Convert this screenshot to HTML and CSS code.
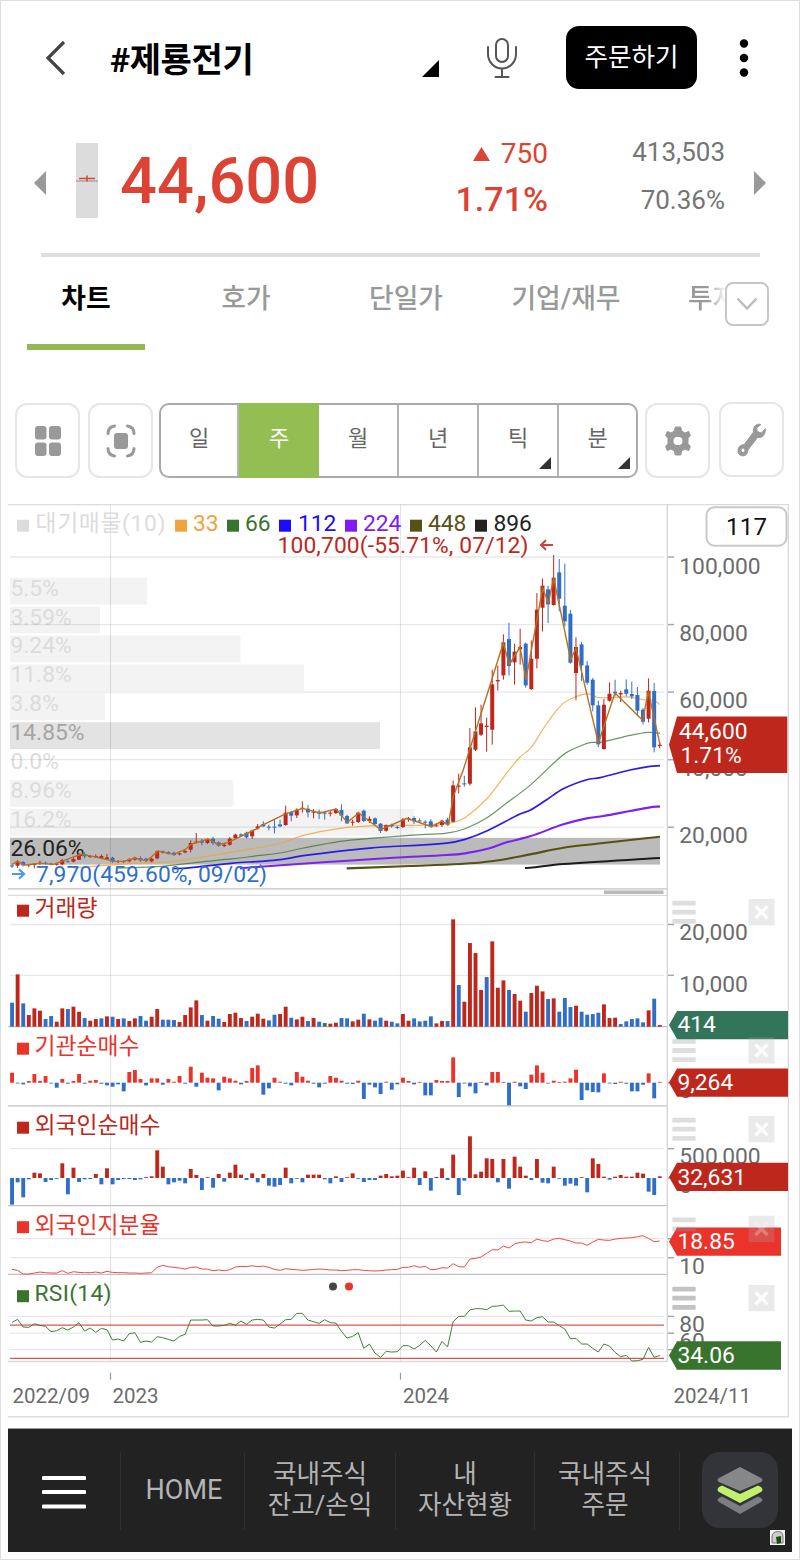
FILE: index.html
```html
<!DOCTYPE html>
<html lang="ko">
<head>
  <meta charset="UTF-8">
  <meta name="viewport" content="width=device-width, initial-scale=1">
  <title>제룡전기 - 차트</title>
  <link rel="stylesheet" href="styles.css">
</head>
<body>
<div class="screen">

<header class="topbar">
<svg class="back" width="20" height="36" viewBox="0 0 20 36"><path d="M18 2 2 18 18 34"/></svg>
<h1 class="name">#제룡전기</h1>
<svg class="corner" width="17" height="17" viewBox="0 0 17 17"><path d="M17 0V17H0z"/></svg>
<svg class="mic" width="32" height="42" viewBox="0 0 32 42"><rect x="10" y="2" width="12" height="23" rx="6"/><path d="M2 10v7a14 14.5 0 0 0 28 0V10M16 32v8M9.500 40h13"/></svg>
<button class="order">주문하기</button>
<svg class="more" width="10" height="40" viewBox="0 0 10 40"><circle cx="5" cy="5.500" r="4.200"/><circle cx="5" cy="20" r="4.200"/><circle cx="5" cy="34.500" r="4.200"/></svg>
</header>

<section class="quote">
<svg class="arrow" width="12" height="24" viewBox="0 0 12 24"><path d="M12 0V24L0 12z"/></svg>
<svg class="mini" width="22" height="75" viewBox="0 0 22 75"><rect width="22" height="75" fill="#dcdcdc"/><path d="M0 38h22" stroke="#a8a8a8" stroke-width="1.500"/><path d="M3 35.500h16M11 32.500v6" stroke="#dd4334" stroke-width="1.500"/></svg>
<strong class="price">44,600</strong>
<div class="diff">
<span class="won"><svg width="17" height="14" viewBox="0 0 17 14"><path d="M8.500 0 17 14H0z"/></svg>750</span>
<span class="pct">1.71%</span>
</div>
<div class="amount"><span>413,503</span><span>70.36%</span></div>
<svg class="arrow" width="12" height="24" viewBox="0 0 12 24"><path d="M0 0V24L12 12z"/></svg>
</section>

<nav class="tabs">
<a class="tab on">차트</a>
<a class="tab">호가</a>
<a class="tab">단일가</a>
<a class="tab">기업/재무</a>
<a class="tab last">투자</a>
<button class="fold"><svg width="22" height="14" viewBox="0 0 22 14"><path d="M1.500 1.500 11 11.500 20.500 1.500"/></svg></button>
</nav>

<section class="tools">
<button class="tool"><svg width="28" height="30" viewBox="0 0 28 30"><rect x="1" y="0" width="11.500" height="13.500" rx="3"/><rect x="15" y="0" width="12" height="13.500" rx="3"/><rect x="1" y="16.500" width="11.500" height="13.500" rx="3"/><rect x="15" y="16.500" width="12" height="13.500" rx="3"/></svg></button>
<button class="tool scan"><svg width="30" height="34" viewBox="0 0 30 34"><rect x="8" y="9" width="14" height="16" rx="3"/><path class="ln" d="M2 9.500Q2 3 8.500 2M21.500 2Q28 3 28 9.500M28 24.500Q28 31 21.500 32M8.500 32Q2 31 2 24.500"/></svg></button>
<div class="period">
<span>일</span>
<span class="on">주</span>
<span>월</span>
<span>년</span>
<span class="sub">틱</span>
<span class="sub">분</span>
</div>
<button class="tool gear"><svg width="26" height="30" viewBox="0 0 26 30"><path fill-rule="evenodd" stroke="#999" stroke-linejoin="round" d="M10.300 1h5.400l1 4 3.300 2 3.700-1.600 1.700 4-2.400 3v5.200l2.400 3-1.700 4L20 23l-3.300 2-1 4h-5.400l-1-4L6 23l-3.700 1.600-1.700-4 2.400-3v-5.200l-2.400-3 1.700-4L6 7l3.300-2zM13 10.500a4.200 4.600 0 1 0 0 9 4.200 4.600 0 1 0 0-9z"/></svg></button>
<button class="tool wrench"><svg width="30" height="34" viewBox="0 0 30 34"><path fill-rule="evenodd" stroke="#999" stroke-linejoin="round" d="M24 1.500c-5-1.400-8 2.300-7.600 7.700L7 21.800c-3-.5-6 2-6 5.900 0 7 9.800 7 9.900-.6L20.500 14.500c4.800 1 8.300-3.200 7.800-9L24.500 10l-4.400-1.400-.3-3.800zM6 25a2 2.300 0 1 0 0 4.600 2 2.300 0 1 0 0-4.600z"/></svg></button>
</section>

<svg class="chart" id="chart" width="782" height="915" viewBox="8 504.300 782 915">
<g id="profile"></g>
<g id="grid"></g>
<g id="series"></g>
<g id="labels"></g>
<g id="tags"></g>
</svg>

<footer class="menu">
<svg class="burger" width="44" height="34" viewBox="0 0 44 34"><path d="M1.500 3h41M1.500 17h41M1.500 31.500h41"/></svg>
<a class="home">HOME</a>
<a class="w2">국내주식<br>잔고/손익</a>
<a class="w3">내<br>자산현황</a>
<a class="w4">국내주식<br>주문</a>
<span class="layers"><svg width="48" height="50" viewBox="0 0 48 50">
<path fill="#868789" d="M24 2 45 13q3 2 0 4L24 26 3 17q-3-2 0-4z"/>
<path fill="#7c7d80" d="M3 33l3-1.500L24 41l18-9.500 3 1.500q3 2 0 4L24 49 3 37q-3-2 0-4z"/>
<path fill="#c1f06a" d="M3 22l3-1.500L24 29l18-8.500 3 1.500q3 3 0 5L24 38 3 27q-3-2 0-5z"/>
</svg></span>
<svg class="badge" width="15" height="15" viewBox="0 0 15 15"><rect width="15" height="15" fill="#f4f4f4"/><path d="M2 13V7Q2 2 7.500 1.500T13 7v6z" fill="#ccc" stroke="#777"/><path d="M6 7l5-1v7l-4 1z" fill="#1d4a10"/></svg>
</footer>

</div>
<script src="chart.js"></script>
</body>
</html>
```
FILE: styles.css
```css
* {
margin: 0;
padding: 0;
box-sizing: border-box;
}
body {
width: 800px;
height: 1560px;
background: #fff;
font-family: Roboto, "Noto Sans CJK KR", sans-serif;
}
button {
font-family: inherit;
background: #fff;
border: none;
display: flex;
align-items: center;
justify-content: center;
}
.screen {
width: 800px;
height: 1560px;
border: 1px solid #dedede;
display: flex;
flex-direction: column;
overflow: hidden;
position: relative;
}

/* header */
.topbar {
height: 113px;
padding-left: 45px;
display: flex;
align-items: center;
flex-shrink: 0;
}
.back {
fill: none;
stroke: #444;
stroke-width: 3.2;
}
.name {
width: 357px;
padding: 5px 0 0 44px;
font-size: 34px;
font-weight: 700;
letter-spacing: -0.4px;
white-space: nowrap;
line-height: 40px;
}
.corner {
margin: 22px 0 0 -1px;
}
.mic {
margin-left: 47px;
fill: none;
stroke: #555;
stroke-width: 2;
stroke-linecap: round;
}
.order {
width: 131px;
height: 63px;
margin-left: 48px;
padding-bottom: 6px;
border-radius: 13px;
background: #000;
color: #fff;
font-size: 25.500px;
}
.more {
margin-left: 42px;
}

/* price */
.quote {
height: 140px;
padding-left: 33px;
display: flex;
align-items: flex-start;
flex-shrink: 0;
color: #dd4334;
}
.arrow {
fill: #999;
margin-top: 57px;
}
.mini {
margin: 29px 0 0 30px;
}
.price {
width: 220px;
margin: 27px 0 0 22px;
font-size: 65px;
line-height: 80px;
font-weight: 500;
}
.diff, .amount {
display: flex;
flex-direction: column;
align-items: flex-end;
}
.diff {
width: 208px;
padding-top: 20px;
}
.won {
display: flex;
align-items: center;
gap: 11px;
font-size: 28px;
line-height: 40px;
}
.won svg {
fill: #dd4334;
}
.pct {
font-size: 34px;
font-weight: 500;
line-height: 40px;
margin-top: 5px;
}
.amount {
width: 177px;
padding-top: 18px;
color: #757575;
font-size: 26px;
line-height: 40px;
gap: 8px;
}
.amount + .arrow {
margin-left: 29px;
}

/* tabs */
.tabs {
height: 97px;
margin-left: 40px;
width: 719px;
border-top: 4px solid #dedede;
display: flex;
flex-shrink: 0;
margin-top: -1px;
position: relative;
}
.tab {
width: 160px;
height: 93px;
padding-top: 22px;
text-align: center;
font-size: 26.800px;
line-height: 40px;
font-weight: 500;
color: #999;
flex-shrink: 0;
}
.tab:first-child {
width: 118px;
margin: 0 21px 0 -14px;
}
.tab.on {
color: #000;
font-weight: 700;
border-bottom: 6px solid #90b951;
}
.tab.last {
width: 50px;
margin-left: 42px;
text-align: left;
white-space: nowrap;
-webkit-mask-image: linear-gradient(90deg, #000 20px, transparent 38px);
mask-image: linear-gradient(90deg, #000 20px, transparent 38px);
}
.fold {
position: absolute;
left: 684px;
top: 25px;
width: 44px;
height: 44px;
border: 2.5px solid #c6c6c6;
border-radius: 8px;
}
.fold svg {
fill: none;
stroke: #bbb;
stroke-width: 2.5;
}

/* toolbar */
.tools {
height: 76px;
margin: 53px 0 25px 14px;
display: flex;
align-items: flex-start;
flex-shrink: 0;
}
.tool {
width: 65px;
height: 75px;
margin-right: 8px;
border: 2px solid #e6e6e6;
border-radius: 12px;
fill: #999;
}
.tool .ln {
fill: none;
stroke: #999;
stroke-width: 3;
stroke-linecap: round;
}
.scan {
margin-right: 6px;
}
.period {
width: 479px;
height: 75px;
margin-right: 7px;
border: 2px solid #aaa;
border-radius: 10px;
display: grid;
grid-template-columns: 78px repeat(4, 80px) 1fr;
position: relative;
}
.period span {
padding-top: 14px;
text-align: center;
font-size: 22px;
line-height: 40px;
color: #666;
border-right: 2px solid #b4b4b4;
position: relative;
}
.period span:last-child {
border-right: none;
}
.period .on {
margin: -2px 0;
padding-top: 16px;
background: #93bf52;
color: #fff;
border-right: none;
}
.sub::after {
content: "";
position: absolute;
right: 6px;
bottom: 7px;
border-left: 12px solid transparent;
border-bottom: 12px solid #333;
}
.gear {
margin-right: 9px;
}
.wrench {
margin-top: -1px;
}

/* chart */
.chart {
display: block;
margin-left: 7px;
flex-shrink: 0;
}
.chart text {
font-size: 22.8px;
fill: #6b6b6b;
}
.chart .date {
font-size: 20.5px;
}
.chart .onTag {
fill: #fff;
}

/* bottom menu */
.menu {
width: 784px;
height: 124px;
margin: 9px 0 0 7px;
padding-left: 34px;
background: #222;
border-top: 1px solid #999;
display: flex;
align-items: center;
flex-shrink: 0;
position: relative;
}
.burger {
margin: 2px 34px 0 0;
stroke: #fff;
stroke-width: 4;
stroke-linecap: round;
}
.menu a {
height: 78px;
display: flex;
align-items: center;
justify-content: center;
text-align: center;
border-left: 1px solid #2f2f2f;
color: #b4b4b4;
font-size: 25.6px;
line-height: 31px;
padding-bottom: 1px;
}
.menu .home {
width: 124px;
font-size: 27px;
padding-left: 3px;
}
.menu .w2 {
width: 151px;
}
.menu .w3 {
width: 139px;
}
.menu .w4 {
width: 146px;
padding-right: 4px;
border-right: 1px solid #2f2f2f;
}
.layers {
width: 76px;
height: 76px;
margin: -2px 0 0 22px;
border-radius: 18px;
background: #33343a;
display: flex;
align-items: center;
justify-content: center;
}
.badge {
position: absolute;
right: 7px;
bottom: 7px;
}
```
FILE: chart.js
```js
const RED = '#bd271c', BRIGHT = '#ea332b', BLUE = '#316fc6', GREEN = '#39742f';
const NS = 'http://www.w3.org/2000/svg';
const STEP = 5.584;
const xAt = i => 12 + i * STEP;

function add(id, tag, attrs, text) {
  const el = document.createElementNS(NS, tag);
  for (const k in attrs) el.setAttribute(k, attrs[k]);
  if (text) el.textContent = text;
  document.getElementById(id).appendChild(el);
  return el;
}
function line(id, x1, y1, x2, y2, stroke, w) {
  add(id, 'path', { d: `M${x1} ${y1}L${x2} ${y2}`, stroke, 'stroke-width': w || 1.2 });
}
function rect(id, x, y, width, height, fill, opacity) {
  add(id, 'rect', { x, y, width, height, fill, opacity: opacity || 1 });
}
function label(x, y, text, fill, len, id) {
  const el = add(id || 'labels', 'text', { x, y }, text);
  if (fill) el.style.fill = fill;
  if (len) el.setAttribute('textLength', len);
  return el;
}

// volume profile
const profile = [
  ['5.5%', 137], ['3.59%', 90], ['9.24%', 230.5], ['11.8%', 294], ['3.8%', 95],
  ['14.85%', 370, '#e3e3e3', '#a5a5a5'], ['0.0%', 0], ['8.96%', 223.5],
  ['16.2%', 404], ['26.06%', 650, '#bbb', '#222']
];
profile.forEach(([t, w, bg, fg], i) => {
  rect('profile', 10, 578 + i * 28.9, w, 26.8, bg || '#f3f3f3');
  label(10.5, 596 + i * 28.9, t, fg || '#dcdcdc', 0, 'profile');
});

// grid and pane frames
[557.3, 624.9, 692.4, 760, 827.5, 924.8, 975.6, 1149, 1239, 1258, 1316.7, 1333.5, 1350].forEach(y => {
  line('grid', 10, y, 664, y, 'rgba(0,0,0,.09)', 1.3);
  line('grid', 667, y, 674, y, '#a3a8b0', 1.5);
});
[1083, 1178.3].forEach(y => line('grid', 667, y, 674, y, '#a3a8b0', 1.5));
[110.5, 400.5].forEach(x => {
  line('grid', x, 504, x, 1362, 'rgba(0,0,0,.1)', 1.2);
  line('grid', x, 1373, x, 1380, '#999', 1.2);
});
line('grid', 8, 505, 788, 505, '#dcdcdc');
[889.2, 1027, 1106.2, 1206, 1274.6].forEach(y => line('grid', 8, y, 667, y, '#c2c2c2', 1.3));
[895.7, 1361.8].forEach(y => line('grid', 8, y, 667, y, '#dadada', 1.3));
line('grid', 667.3, 504, 667.3, 1362, '#d4d4d4', 1.3);
line('grid', 788.3, 504, 788.3, 1417, '#d9d9d9', 1.3);
line('grid', 8, 1417, 789, 1417, '#dedede', 1.5);
rect('grid', 604, 890.7, 59.5, 3.6, '#bbb');

// candles: colour, body top, body bottom, high, low
const before = `b527,530,524,535 r515,528,511,535 b517,527 r524,527,523,533 r522,526,521,536 r519,523,513,525 b519,522 b522,524 r522,525
r511,524 b514,516 r508,516,503,518 r493,510,490,511 b493,500,488,506 r499,502 r499,502,494,505 r499,506,494,508 r503,508,493,509 b504,516
r514,517 r515,517 r509,515 r504,510 b505,512,500,516 b507,514 r507,515 r485,506 b485,489 b487,492 b489,496 r491,494 r484,488 r460,480,452,488
r456,459,430,462 b454,459,448,467 r449,460 b447,460,442,466 b458,468 r465,469 r447,465,442,468 r435,445 b434,438 b429,443 r423,440,420,448
r410,416,403,420 b403,410,395,412 b411,414,405,422 b411,414,387,431 b404,410,390,413 r369,406,348,408 b367,378,365,395 r360,377,356,385
r354,357,335,369 b357,368,346,383 r366,369,358,386 b366,372,360,388 b369,372,365,390 r369,372,365,380 r358,370 b361,378,344,395 b379,401,375,403
r396,399,390,408 r369,397 b363,394 r387,394,380,400 b386,403 b402,424,400,430 r407,423 b406,410,402,414 b412,415,408,418 r389,412,385,415
r386,389,382,396 b385,395,380,403 b392,395,386,399 b396,399,392,416 b395,410,388,413 r407,410,400,411 r393,406,390,412 b390,405,384,408
r287,396,273,398 r288,291,252,311 b281,284,258,291 r173,282,115,288 r125,180,53,184 r101,135,45,139 r108,112,84,186`;
const after = `r464,600,420,645 r451,455,408,483 r338,437,314,450 b328,409,279,438 r366,398,342,465 r352,359,297,405 b342,467,338,474
r387,478,332,481 r240,387,190,416 r168,234,146,305 b179,224,168,280 r144,226,76,228 b128,207,88,245 b228,275,102,290 b252,399,241,402
r352,430,323,512 b344,407,336,454 b407,459,394,465 b450,527,445,545 b527,644,513,652 r525,658,508,660 r492,513,458,516 b486,491,450,500
r490,494,483,517 b479,492,449,500 b493,500,456,508 b496,543,472,556 b540,576,535,584 r483,567,446,578 b484,653,460,668 r645,649,637,656`;
function candles(data, y0, start) {
  data.split(/\s+/).forEach((s, n) => {
    const [t, b, h = t - 3, l = +b + 3] = s.slice(1).split(',').map(Number);
    const x = xAt(start + n), c = s[0] === 'r' ? RED : BLUE;
    line('series', x, y0 + h / 3, x, y0 + l / 3, c, 1);
    rect('series', x - 2, y0 + t / 3, 4, (b - t) / 3, c);
  });
}

// lines are grouped in pieces, each with its own origin
function points(pieces) {
  const pts = [];
  pieces.forEach(([x0, y0, s]) => s.split(' ').forEach(p => {
    const [x, y] = p.split(',').map(Number);
    pts.push([x0 + x / 3, y0 + y / 3]);
  }));
  return pts;
}
function curve(pieces, stroke, w, opacity) {
  const p = points(pieces);
  let d = 'M' + p[0];
  for (let i = 0; i < p.length - 1; i++) {
    const b = p[i], c = p[i + 1], dx = (c[0] - b[0]) / 3;
    const slope = (m, n) => (n[1] - m[1]) / (n[0] - m[0]);
    const s1 = slope(p[i - 1] || b, c), s2 = slope(b, p[i + 2] || c);
    d += `C${b[0] + dx} ${b[1] + s1 * dx} ${c[0] - dx} ${c[1] - s2 * dx} ${c}`;
  }
  add('series', 'path', { d, fill: 'none', stroke, 'stroke-width': w, opacity: opacity || 1 });
}
curve([[0, 690, '220,535 400,521 520,515 660,493 740,480'], [260, 690, '0,473 65,460 130,437 240,416 350,408 460,407 520,404 580,398 615,384 680,328 730,264'],
  [430, 530, '238,720 270,682 303,654 340,597 375,548 403,518 440,500 465,493 485,494 505,504 600,502 640,510 670,512 690,524']], '#f0a43c', 1.2, 0.8);
curve([[0, 690, '355,535 470,531 600,517 700,507'], [260, 690, '0,497 60,490 130,475 240,455 330,446 460,436 560,430 615,417 680,385 740,340 810,287'],
  [430, 530, '380,692 410,668 460,645 485,638 510,638 600,617 655,608 690,611']], '#39742f', 1.2, 0.75);
curve([[0, 690, '520,537 560,535 700,520'], [260, 690, '0,515 60,510 130,498 240,484 330,475 560,460 615,449 680,424 780,373'],
  [530, 690, '0,362 50,330 100,297 170,270 210,264 300,241 360,230 390,228']], '#2a1be8', 1.7);
curve([[0, 690, '720,536'], [260, 690, '0,531 200,517 400,504 560,496 615,491 680,478 740,458'],
  [530, 690, '0,440 100,404 170,386 220,379 300,364 360,353 390,350']], '#7d22ee', 2.1);
curve([[260, 690, '260,536 450,529 600,523 700,514'], [530, 690, '0,494 100,474 200,462 390,441']], '#565216', 2.1);
curve([[260, 690, '795,535'], [530, 690, '0,534 100,523 390,505']], '#1c1c1c', 2.1);
candles(before, 690, 0);
candles(after, 530, 86);
const zigzag = points([[0, 690, '36,524 52,516 75,526 120,521 160,524 245,493 345,515 370,515 405,505 440,513 475,484 520,494 555,480 575,463 625,448 655,465 685,458 775,415'],
  [260, 690, '0,410 75,373 127,356 180,370 228,358 262,398 296,370 362,420 440,386 515,411 545,395 565,405 580,320'],
  [430, 530, '100,720 220,340 238,405 270,352 288,450 338,175 355,220 371,145 422,390 438,355 505,640 555,490 638,572 655,485 690,645']]);
add('series', 'polyline', { points: zigzag.join(' '), fill: 'none', stroke: '#b9701f', 'stroke-width': 1.4 });

// volume
const volume = `b72 r157 b70 r35 r55 r48 b23 b32 r15 r55 b53 r60 r45 b26 r18 r23 b25 r31 b30 r23 b25 r17 r25 b32 b18 r30 r53 b21 b21 b20 r14
r35 r58 r79 b35 r18 b32 b24 r14 r38 r42 r26 b17 r30 r39 r24 b19 b36 r38 r60 b27 r22 r30 b17 r26 b15 g11 r9 r12 b26 b25 r16 r21 b39 r22 b18
b27 r18 b15 b10 r38 r18 b25 b16 b18 b31 r10 r17 b17 r322 b125 r75 r251 r221 r110 b149 r256 r117 r139 b110 r98 r78 b45 r101 r123 r106 b83 r85
b45 b86 b59 r63 b45 b36 b38 b42 r67 r26 r27 b8 b16 b23 b25 b13 r49 b84 r5`;
volume.split(/\s+/).forEach((s, i) => {
  const h = s.slice(1) / 3;
  rect('series', xAt(i) - 1.9, 1027 - h, 3.9, h, { r: RED, b: BLUE, g: '#33755a' }[s[0]]);
});

function bars(data, base, up) {
  data.forEach((v, i) => {
    const h = Math.max(Math.abs(v) / 3, 0.8);
    rect('series', xAt(i) - 1.9, v > 0 ? base - h : base, 3.9, h, v > 0 ? up : BLUE);
  });
}
bars([30,-2,-5,5,26,5,20,-2,-15,11,-3,5,26,-3,6,8,-3,-8,-12,-5,-26,32,38,11,-8,13,13,-6,11,3,20,-3,48,-12,30,15,13,-23,18,13,6,-5,5,44,52,-36,-17,15,3,-3,-8,
32,18,6,-3,-14,-3,20,15,6,-3,-4,6,-49,-6,-14,-34,3,-21,-5,15,5,-5,2,-38,-38,8,5,5,76,-43,-2,-11,-32,2,-8,32,32,2,-68,3,-11,-19,24,52,30,-2,6,2,3,13,39,
-52,-23,-28,-29,28,-2,-4,3,-3,-26,-26,-6,28,-47,2], 1083, BRIGHT);
bars([-80,-13,-58,-4,16,14,-12,-6,-2,44,-49,31,-12,-4,-3,12,-19,29,-19,-6,-3,-3,-6,-4,2,5,83,34,-19,-13,-8,-16,27,9,-36,2,-29,12,-11,16,40,10,-6,14,-13,12,
-23,-26,-21,31,-16,-2,-13,10,10,10,-4,-16,5,-12,2,14,-2,-12,-6,-6,7,12,5,7,22,2,31,-21,20,-38,3,29,-6,70,-51,-8,125,11,19,59,57,-13,57,-32,64,34,7,-6,57,
-14,-16,34,-2,-23,-17,-23,2,-43,59,42,4,-5,4,9,4,4,16,13,-41,-51,5], 1178.3, RED);

function series(data, stroke) {
  add('series', 'polyline', { points: data.map((v, i) => xAt(i) + ',' + (1100 + v / 3)).join(' '), fill: 'none', stroke, 'stroke-width': 1 });
}
series([509,512,523,523,520,517,519,520,520,513,521,516,518,519,519,517,520,515,518,519,519,520,520,521,520,519,503,497,501,503,505,508,503,502,508,508,513,
511,513,510,502,500,501,498,501,499,503,509,512,507,509,510,512,511,509,508,509,511,511,513,512,510,510,512,513,514,513,511,510,509,503,503,498,503,500,510,
509,504,505,492,501,502,478,476,472,461,450,451,439,445,433,428,427,429,418,423,425,418,416,420,424,430,430,437,427,419,421,422,418,416,415,414,411,408,416,
426,424], '#ee4a43');
[1325.5, 1358.7].forEach(y => line('series', 10, y, 664, y, '#d9564c', 1.2));
series([668,659,682,683,672,677,680,696,693,684,691,682,669,694,685,698,686,690,721,718,724,702,699,728,724,727,711,714,719,724,710,704,661,661,661,660,679,
679,677,671,676,664,674,661,659,661,682,685,673,660,659,641,641,661,666,671,660,669,670,695,715,710,699,746,733,760,773,755,757,756,738,738,748,737,722,738,
757,725,742,666,650,650,631,627,627,630,620,619,616,635,634,634,661,664,654,651,667,667,678,688,717,716,733,733,746,757,733,739,758,771,767,784,783,779,743,
773,767].filter((v, i, all) => all.length === 117 || i !== 18), '#43803a');

// legends
[[17, 35.5, '대기매물(10)', '#dcdcdc', 130], [175, 193, '33', '#f0a43c'], [227, 245, '66', GREEN], [279, 298, '112', '#1c0cff'],
 [345, 363, '224', '#7f1bfa'], [410, 428, '448', '#565216'], [475, 493.5, '896', '#222']].forEach(([x, tx, t, c, len]) => {
  rect('labels', x, 520, 12, 12, c);
  label(tx, 531, t, c, len);
});
[[905, 916.7, '거래량', RED, 63], [1043, 1054.5, '기관순매수', BRIGHT, 105], [1122, 1133.5, '외국인순매수', RED, 126],
 [1221.500, 1233, '외국인지분율', BRIGHT, 126], [1290.500, 1301, 'RSI(14)', GREEN, 77]].forEach(([y, ty, t, c, len]) => {
  rect('labels', 17, y, 12, 12, c);
  label(34.5, ty, t, c, len);
});
label(277.5, 553, '100,700(-55.71%, 07/12)', RED, 251);
add('labels', 'path', { d: 'M553 545.200H541M546 540.500 541 545.200 546 550', fill: 'none', stroke: '#d0403a', 'stroke-width': 2 });
label(36, 881.9, '7,970(459.60%, 09/02)', '#2f70cb', 231);
add('labels', 'path', { d: 'M12 874.300H24M19 869.500 24 874.300 19 879', fill: 'none', stroke: '#4d97f6', 'stroke-width': 2.2 });
add('labels', 'circle', { cx: 333, cy: 1286.7, r: 4, fill: '#444' });
add('labels', 'circle', { cx: 349, cy: 1286.7, r: 4, fill: BRIGHT });

// axis
[[574, '100,000'], [641, '80,000'], [708.5, '60,000'], [776, '40,000'], [843.5, '20,000'], [940.8, '20,000'], [991.9, '10,000'],
 [1098, '0'], [1164.300, '500,000'], [1193.500, '0'], [1274, '10'], [1332.5, '80'], [1349, '60']].forEach(([y, t]) => label(679.3, y, t));
[[12.5, '2022/09'], [112.5, '2023'], [403, '2024'], [673.5, '2024/11']].forEach(([x, t]) => label(x, 1403, t).setAttribute('class', 'date'));

// price tags on the axis
function tag(y, h, right, fill, rows) {
  add('tags', 'path', { d: `M669 ${y + h / 2}L677 ${y}H${right}V${y + h}H677z`, fill });
  rows.forEach(([x, ty, t]) => label(x, ty, t, 0, 0, 'tags').setAttribute('class', 'onTag'));
}
tag(716.7, 56.6, 787.3, RED, [[679, 739.3, '44,600'], [680.5, 763, '1.71%']]);
tag(1011.2, 28.4, 788, '#33755a', [[677.500, 1032.7, '414']]);
tag(1068.7, 28.4, 788, RED, [[677.5, 1090.3, '9,264']]);
tag(1163, 28.4, 788, RED, [[677.5, 1185, '32,631']]);
tag(1227.700, 28.4, 781, BRIGHT, [[677.5, 1249.3, '18.85']]);
tag(1341.600, 28.4, 781, GREEN, [[677.5, 1363.6, '34.06']]);

// pane handles and close buttons
[[899, '#999'], [1037.300, '#999'], [1116, '#999'], [1215.800, '#999'], [1285, '#444']].forEach(([y, c], n) => {
  for (let k = 0; k < 3; k++) {
    if (n === 3 && k === 2) continue;
    add('tags', 'rect', { x: 672.3, y: y + 2 + k * 9.1, width: 23.4, height: 4.8, rx: 1, fill: c, opacity: 0.32 });
  }
  rect('tags', 748.5, y + 0.3, 26, 26.2, '#aaa', 0.25);
  add('tags', 'path', { d: `M755.500 ${y + 7.500}l12 12m0 -12l-12 12`, stroke: '#fff', 'stroke-width': 3.4, opacity: n === 3 ? 0.25 : 0.9 });
});

// candle count
add('tags', 'rect', { x: 706.5, y: 507.5, width: 80, height: 38.5, rx: 8, fill: '#fff', stroke: '#c9c9c9', 'stroke-width': 2 });
label(726, 535.5, '117', '#111', 41, 'tags').style.fontSize = '24px';
```
